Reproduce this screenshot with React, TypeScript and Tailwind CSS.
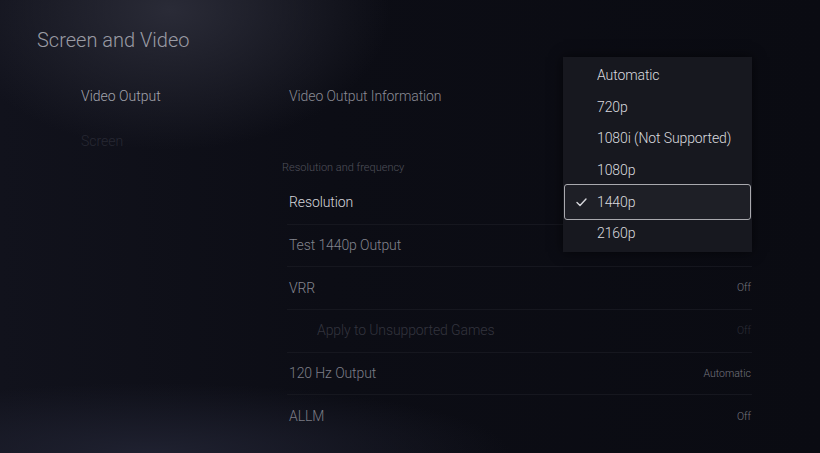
import React from 'react';

const rows = [
  { label: 'Resolution', value: '', labelClass: 'text-[#d4d4da]', indent: false },
  { label: 'Test 1440p Output', value: '', labelClass: 'text-[#83848d]', indent: false },
  { label: 'VRR', value: 'Off', labelClass: 'text-[#85868f]', indent: false },
  { label: 'Apply to Unsupported Games', value: 'Off', labelClass: 'text-[#33343e]', indent: true },
  { label: '120 Hz Output', value: 'Automatic', labelClass: 'text-[#7d7e87]', indent: false },
  { label: 'ALLM', value: 'Off', labelClass: 'text-[#7b7c85]', indent: false },
];

const options = ['Automatic', '720p', '1080i (Not Supported)', '1080p', '1440p', '2160p'];

export default function App() {
  return (
    <div className="relative w-[820px] h-[453px] overflow-hidden font-['Roboto',sans-serif] font-light bg-[#0b0c13] bg-[radial-gradient(ellipse_220px_140px_at_170px_10px,#2a2b37_0%,transparent_100%),radial-gradient(ellipse_360px_70px_at_150px_453px,#1f2130_0%,transparent_100%),linear-gradient(90deg,#11121c_0%,#0c0d15_40%,#0a0b12_100%)]">
      {/* Header */}
      <div className="pt-[26px] pl-[37px] text-[20px] leading-[28px] text-[#9a9ba4]">Screen and Video</div>

      <div className="flex mt-[19.5px]">
        {/* Left nav */}
        <nav className="w-[282px] pl-[81px]">
          <div className="h-[45px] flex items-center text-[14px] text-[#a2a3ac]">Video Output</div>
          <div className="h-[45px] flex items-center text-[14px] text-[#272833]">Screen</div>
        </nav>

        {/* Settings list */}
        <main className="w-[470px]">
          <div className="h-[45px] flex items-center pl-[7px] text-[14px] tracking-[-0.1px] text-[#8a8b94]">Video Output Information</div>
          <div className="mt-[42.5px] h-[14px] leading-[14px] text-[11px] text-[#50515b]">Resolution and frequency</div>
          <div className="mt-[7px]">
            {rows.map((r, i) => (
              <div
                key={r.label}
                className={`h-[42.7px] flex items-center justify-between pr-[1px] ${i < rows.length - 1 ? 'border-b border-[#16171f]' : ''} ml-[5px]`}
              >
                <span className={`text-[14px] tracking-[-0.1px] ${r.indent ? 'pl-[30px]' : 'pl-[2px]'} ${r.labelClass}`}>{r.label}</span>
                <span className={`text-[10.5px] ${r.indent ? 'text-[#2c2d37]' : 'text-[#74757e]'}`}>{r.value}</span>
              </div>
            ))}
          </div>
        </main>
      </div>

      {/* Dropdown */}
      <div className="absolute left-[563px] top-[57px] w-[189px] h-[195px] bg-[#17181f] pt-[3px] shadow-[0_0_12px_rgba(0,0,0,0.6)]">
        {options.map((o) => {
          const selected = o === '1440p';
          return (
            <div key={o} className="relative h-[31.6px] flex items-center pl-[34px] text-[14px] tracking-[-0.1px] text-[#dadadf]">
              {selected && (
                <>
                  <div className="absolute left-[1px] right-[1px] -top-[2px] -bottom-[2px] rounded-[3px] border-[1.5px] border-[#a9a9ae] bg-[#1e1f26]" />
                  <svg className="absolute left-[13px] top-[12px]" width="11" height="9" viewBox="0 0 11 9" fill="none">
                    <path d="M1 4.5 L4 7.5 L10 1" stroke="#d6d6db" strokeWidth="1.4" strokeLinecap="round" strokeLinejoin="round" />
                  </svg>
                </>
              )}
              <span className="relative">{o}</span>
            </div>
          );
        })}
      </div>
    </div>
  );
}
